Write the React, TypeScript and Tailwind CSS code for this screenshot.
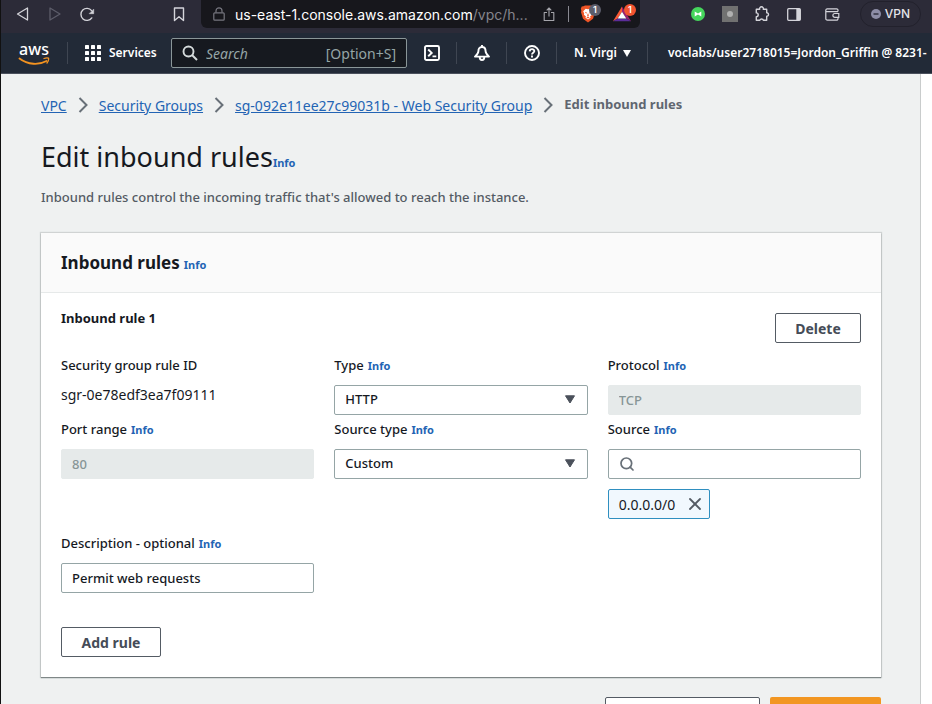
import React from "react";
import { Search, X } from "lucide-react";

const field =
  "h-[30px] w-full rounded-xs border border-[#95a5a6] bg-white px-2.5 text-[13px] font-medium text-[#16191f] outline-none";
const disabledField =
  "h-[30px] w-full rounded-xs border border-[#e6eaea] bg-[#e6eaea] px-2.5 text-[13px] font-medium text-[#879596] outline-none";
const outlineButton =
  "h-[30px] rounded-xs border border-[#545b64] bg-white text-[14px] font-bold text-[#454c57]";

function Info({ about }: { about: string }) {
  return (
    <a href="#info" aria-label={"Info about " + about} className="text-[11px] font-bold text-[#2364b4]">
      Info
    </a>
  );
}

function Separator() {
  return (
    <svg viewBox="0 0 10 16" className="h-4 w-2.5 shrink-0" fill="none" stroke="#687078" strokeWidth="2">
      <path d="m1.500 1 7 7-7 7" />
    </svg>
  );
}

function Field({
  id,
  label,
  info = true,
  children,
}: {
  id: string;
  label: string;
  info?: boolean;
  children: React.ReactNode;
}) {
  return (
    <div>
      <div className="mb-2.5 flex h-5 items-baseline gap-1 text-[13px] leading-5 font-medium">
        <label htmlFor={id}>{label}</label>
        {info && <Info about={label} />}
      </div>
      {children}
    </div>
  );
}

function Select({ id, value }: { id: string; value: string }) {
  return (
    <div className="relative">
      <select id={id} className={field + " appearance-none"}>
        <option>{value}</option>
      </select>
      <svg viewBox="0 0 12 9" className="pointer-events-none absolute top-[10px] right-3 h-[9px] w-3 fill-[#4b515b]">
        <path d="M1.500 .8h9L6 8z" stroke="#4b515b" strokeLinejoin="round" />
      </svg>
    </div>
  );
}

function BrowserBar() {
  return (
    <div className="flex h-[33px] shrink-0 bg-[#2c2b38] font-[Inter,sans-serif] text-[#d4d4da]">
      <div className="flex h-7 w-[200px] shrink-0 items-center pl-[15px]">
        <button aria-label="Back" className="w-8">
          <svg viewBox="0 0 14 14" className="size-3.5" fill="none" stroke="currentColor" strokeWidth="1.3" strokeLinejoin="round">
            <path d="M11.5 1v12L1.5 7z" />
          </svg>
        </button>
        <button aria-label="Forward" className="w-8 text-[#5d5d6a]">
          <svg viewBox="0 0 14 14" className="size-3.5" fill="none" stroke="currentColor" strokeWidth="1.3" strokeLinejoin="round">
            <path d="M2 1v12l10-6z" />
          </svg>
        </button>
        <button aria-label="Reload">
          <svg viewBox="0 0 15 15" className="size-[15px]" fill="none" stroke="currentColor" strokeWidth="1.4" strokeLinecap="round">
            <path d="M11.800 10.900A6 6 0 1 1 11.600 3.600" />
            <path d="M13.700 2.500v4.200H9.500z" fill="currentColor" strokeWidth=".6" strokeLinejoin="round" />
          </svg>
        </button>
        <button aria-label="Bookmark" className="mr-4 ml-auto">
          <svg viewBox="0 0 12 15" className="h-[15px] w-3" fill="none" stroke="currentColor" strokeWidth="1.4" strokeLinejoin="round">
            <path d="M1.5 1h9v12.5L6 9.8l-4.5 3.7z" />
          </svg>
        </button>
      </div>
      <div className="flex h-7 min-w-0 flex-1 items-center rounded-b-md bg-[#17171c] pr-[9px] pl-3">
        <svg viewBox="0 0 12 14" className="h-3.5 w-3 shrink-0" fill="none" stroke="#77777f" strokeWidth="1.2">
          <rect x=".8" y="5.8" width="10.4" height="7.4" rx="1" />
          <path d="M3 5.5V3.8a3 3 0 0 1 6 0v1.7" />
        </svg>
        <span className="ml-2.5 min-w-0 flex-1 truncate text-[14px] text-[#85858c]">
          <span className="text-white">us-east-1.console.aws.amazon.com</span>/vpc/h...
        </span>
        <button aria-label="Share" className="shrink-0">
          <svg viewBox="0 0 12 15" className="h-[15px] w-3" fill="none" stroke="#a5a5ab" strokeWidth="1.1" strokeLinejoin="round">
            <path d="M4 5.5H1.2v8h9.6v-8H8M6 9.5V1.2M3.7 3.3 6 1l2.3 2.3" />
          </svg>
        </button>
        <span className="mx-[13px] h-4 w-px shrink-0 bg-[#8a8a92]" />
        <button aria-label="Brave Shields" className="relative w-[31px] shrink-0">
          <svg viewBox="0 0 16 18" className="ml-[-2px] h-[18px] w-4">
            <path d="M3.5 1.2 5 .4h6l1.5.8 1.8.4.9 2.2-.6 2 .4 1.5-2 6.5L8 17.6l-5-3.8L1 7.3l.4-1.5-.6-2 .9-2.2z" fill="#ee5526" />
            <path d="m8 4.2 2.3-.5 2.5 2.6-1 2.2.3 1.3-2.1 1.6.7 1.2L8 14.5l-2.7-1.9.7-1.2-2.1-1.6.3-1.3-1-2.2 2.5-2.6z" fill="#fff" />
            <path d="m4.8 6.8 2 .7-.5 1.3zm6.4 0-2 .7.5 1.3zM8 8l.9 2.5L8 11.2l-.9-.7zm-1.6 4.3L8 11.6l1.6.7L8 13.6z" fill="#ee5526" />
          </svg>
          <span className="absolute top-[-1px] left-[7px] flex size-3 items-center justify-center rounded-full bg-[#5c5d6b] text-[9px] leading-3 font-semibold text-white">1</span>
        </button>
        <button aria-label="Brave Rewards" className="relative shrink-0">
          <svg viewBox="0 0 18 16" className="h-4 w-[18px]">
            <path d="M9 .5v5.2L4.7 12.5 0 15.3z" fill="#fb5935" />
            <path d="M9 .5v5.2l4.3 6.8 4.7 2.8z" fill="#9a2070" />
            <path d="m0 15.3 4.7-2.8h8.6l4.7 2.8z" fill="#5b2d9a" />
            <path d="m9 5.7 4.3 6.8H4.7z" fill="#fff" />
          </svg>
          <span className="absolute top-[-2px] right-[-5px] flex size-3 items-center justify-center rounded-full bg-[#f25430] text-[9px] leading-3 font-semibold text-white">1</span>
        </button>
      </div>
      <div className="flex h-7 w-[292px] shrink-0 items-center pl-[51px]">
        <button aria-label="Video extension">
          <svg viewBox="0 0 14 14" className="size-3.5">
            <circle cx="7" cy="7" r="7" fill="#45d65c" />
            <path d="M3.7 4.4 7 6.4l3.3-2v5.2L7 7.600l-3.300 2z" fill="#fff" />
          </svg>
        </button>
        <button aria-label="Extension" className="ml-[17px] flex size-4 items-center justify-center bg-[#717171]">
          <span className="size-1.5 rounded-full bg-[#b0b0b0]" />
        </button>
        <button aria-label="Extensions" className="ml-4">
          <svg viewBox="0 0 16 16" className="size-4" fill="none" stroke="currentColor" strokeWidth="1.4" strokeLinejoin="round">
            <path d="M2.3 3.3h3.4a1.9 1.9 0 1 1 3.6 0h3.4v3.4a1.8 1.8 0 1 1 0 3.6v4H9.4a1.9 1.9 0 0 0-3.6 0H2.3v-3.6a1.9 1.9 0 0 0 0-3.8z" />
          </svg>
        </button>
        <button aria-label="Sidebar" className="ml-[17px]">
          <svg viewBox="0 0 14 13" className="h-[13px] w-3.5" fill="none" stroke="currentColor" strokeWidth="1.3">
            <rect x=".7" y=".7" width="12.6" height="11.6" rx="1" />
            <path d="M9.3 1h4v11h-4z" fill="currentColor" stroke="none" />
          </svg>
        </button>
        <button aria-label="Wallet" className="ml-6">
          <svg viewBox="0 0 15 13" className="h-[13px] w-[15px]" fill="none" stroke="currentColor" strokeWidth="1.2">
            <path d="M13 3.600V2.200A1.400 1.400 0 0 0 11.600.8H2A1.400 1.400 0 0 0 .8 2.200v8.300A1.600 1.600 0 0 0 2.400 12.200h9.200A1.400 1.400 0 0 0 13 10.800V9.600M1 3.600h12" />
            <path d="M13.800 5.500H9.800a1.800 1.800 0 0 0 0 3.800h4z" />
          </svg>
        </button>
        <button className="ml-[20px] flex h-[26px] w-[61px] items-center justify-center gap-1 rounded-full border border-[#22212c] text-[12px] font-medium text-[#e4e4e8]">
          <svg viewBox="0 0 10 10" className="size-2.5">
            <circle cx="5" cy="5" r="5" fill="#8d8da6" />
            <path d="M2.500 5h5" stroke="#2c2b38" strokeWidth="1.400" />
          </svg>
          VPN
        </button>
      </div>
    </div>
  );
}

function ConsoleNav() {
  return (
    <nav className="flex h-[41px] shrink-0 items-center overflow-hidden border-b border-[#4a505c] bg-[#222a37] text-white">
      <a href="#home" aria-label="AWS home" className="ml-[17px] flex w-8 shrink-0 flex-col items-center pt-0.5">
        <span className="h-3.5 text-[16px] leading-3 font-medium">aws</span>
        <svg viewBox="0 0 32 9" className="h-[9px] w-8" fill="none" stroke="#f49320" strokeLinecap="round">
          <path d="M1.500 1.500C10 8 21 8.200 28.500 4" strokeWidth="1.900" />
          <path d="M26 1.500c2-.8 3.500-.8 4.500-.3.400 1.500-.3 3.300-1.500 4.800" strokeWidth="1.300" />
        </svg>
      </a>
      <span className="ml-[17px] h-[22px] w-px shrink-0 bg-[#3f4652]" />
      <button className="ml-[17px] flex shrink-0 items-center gap-2 text-[12px] font-semibold">
        <svg viewBox="0 0 16 16" className="size-4 fill-white">
          {[0, 6, 12].map((y) => [0, 6, 12].map((x) => <rect key={x + "-" + y} x={x} y={y} width="4" height="4" rx=".6" />))}
        </svg>
        <span className="w-[45px]">Services</span>
      </button>
      <div className="ml-[17px] flex h-[30px] w-[236px] shrink-0 items-center rounded-xs border border-[#8a9698] bg-[#16191f] px-2.5 text-[14px] text-[#95a5a6]">
        <svg viewBox="0 0 16 16" className="size-4 shrink-0" fill="none" stroke="#d5dbdb" strokeWidth="1.900">
          <circle cx="6.500" cy="6.500" r="5" />
          <path d="m10 10 5 5" />
        </svg>
        <input aria-label="Search" placeholder="Search" className="ml-2 w-0 min-w-0 flex-1 italic outline-none placeholder:text-[#95a5a6]" />
        <span>[Option+S]</span>
      </div>
      <button aria-label="CloudShell" className="flex h-[22px] w-[50px] shrink-0 items-center justify-center border-r border-[#3f4652]">
        <svg viewBox="0 0 16 16" className="size-4" fill="none" stroke="white" strokeWidth="1.900">
          <rect x="1" y="1" width="14" height="14" rx="1.500" />
          <path d="m4.200 4.500 3.500 3.400-3.500 3.400M8.500 11.400h3.800" />
        </svg>
      </button>
      <button aria-label="Notifications" className="flex h-[22px] w-[50px] shrink-0 items-center justify-center border-r border-[#3f4652]">
        <svg viewBox="0 0 16 16" className="size-4" fill="none" stroke="white" strokeWidth="1.900" strokeLinejoin="round">
          <path d="M8 0v2M8 2C5.300 2 4.400 4 4.400 6.300 4.400 8.500 3 9.800 1 11.600h14c-2-1.800-3.400-3.100-3.400-5.300C11.600 4 10.700 2 8 2z" />
          <path d="M5.700 12c0 3.900 4.600 3.900 4.600 0" />
        </svg>
      </button>
      <button aria-label="Help" className="flex h-[22px] w-[50px] shrink-0 items-center justify-center border-r border-[#3f4652]">
        <svg viewBox="0 0 16 16" className="size-4" fill="none" stroke="white" strokeWidth="1.900">
          <circle cx="8" cy="8" r="7" />
          <path d="M5.700 6.400C5.800 3.300 10.400 3.500 10.300 6.200 10.200 7.700 8 7.700 8 9.500M8 10.600v1.800" />
        </svg>
      </button>
      <button className="flex h-[22px] w-[91px] shrink-0 items-center gap-1.5 border-r border-[#3f4652] pl-[17px] text-[12px] font-semibold whitespace-nowrap">
        N. Virgi
        <svg viewBox="0 0 8 7" className="h-[7px] w-2 fill-white">
          <path d="M0 0h8L4 7z" />
        </svg>
      </button>
      <button className="ml-5 shrink-0 text-[12px] font-semibold whitespace-nowrap">voclabs/user2718015=Jordon_Griffin @ 8231-</button>
    </nav>
  );
}

export default function App() {
  return (
    <div className="flex h-screen flex-col overflow-hidden border-l border-[#111] bg-white font-['Noto_Sans','Open_Sans',sans-serif] text-[#16191f]">
      <BrowserBar />
      <ConsoleNav />
      <main className="mr-[11px] min-h-0 flex-1 overflow-hidden border-r border-[#c9cccc] bg-[#eff1f1] pt-[21px] pr-[39px] pl-10">
        <nav aria-label="Breadcrumb" className="flex h-5 items-center gap-[11px] text-[14px] whitespace-nowrap text-[#2364b4]">
          <a href="#vpc" className="underline">VPC</a>
          <Separator />
          <a href="#groups" className="underline">Security Groups</a>
          <Separator />
          <a href="#group" className="underline">sg-092e11ee27c99031b - Web Security Group</a>
          <Separator />
          <span aria-current="page" className="text-[13px] font-bold text-[#5f6670]">Edit inbound rules</span>
        </nav>
        <div className="mt-6 flex h-9 items-baseline">
          <h1 className="text-[27px] leading-9">Edit inbound rules</h1>
          <Info about="editing inbound rules" />
        </div>
        <p className="mt-3 text-[13px] leading-5 font-medium text-[#545b64]">
          Inbound rules control the incoming traffic that's allowed to reach the instance.
        </p>

        <section className="mt-[26px] bg-white shadow-[0_1px_1px_0_#7f8787,0_0_1px_1px_#d0d3d3]">
          <header className="flex h-[60px] items-baseline gap-1 border-b border-[#e6e9e9] bg-[#fafafa] px-5 pt-4">
            <h2 className="text-[17px] leading-7 font-bold">Inbound rules</h2>
            <Info about="inbound rules" />
          </header>
          <form className="px-5 pt-[15px] pb-5">
            <div className="flex items-start justify-between">
              <h3 className="text-[13px] leading-5 font-bold">Inbound rule 1</h3>
              <button type="button" className={outlineButton + " mt-[5px] w-[86px]"}>Delete</button>
            </div>
            <div className="mt-3 grid grid-cols-3 gap-x-5 gap-y-1">
              <Field id="rule-id" label="Security group rule ID" info={false}>
                <output id="rule-id" className="block text-[14px] leading-5">sgr-0e78edf3ea7f09111</output>
              </Field>
              <Field id="type" label="Type">
                <Select id="type" value="HTTP" />
              </Field>
              <Field id="protocol" label="Protocol">
                <input id="protocol" disabled defaultValue="TCP" className={disabledField} />
              </Field>
              <Field id="port" label="Port range">
                <input id="port" disabled defaultValue="80" className={disabledField} />
              </Field>
              <Field id="source-type" label="Source type">
                <Select id="source-type" value="Custom" />
              </Field>
              <Field id="source" label="Source">
                <div className="flex h-[30px] items-center rounded-xs border border-[#95a5a6] px-2.5">
                  <Search className="size-4 text-[#687078]" strokeWidth={2.600} />
                  <input id="source" className="ml-2 min-w-0 flex-1 text-[13px] outline-none" />
                </div>
                <div className="mt-2.5 flex h-[30px] w-[102px] items-center justify-between rounded-xs border border-[#2f8fc0] bg-[#f1f8fe] pr-1 pl-2.5 text-[14px]">
                  0.0.0.0/0
                  <button type="button" aria-label="Remove 0.0.0.0/0">
                    <X className="size-5 text-[#545b64]" strokeWidth={2.200} />
                  </button>
                </div>
              </Field>
            </div>
            <div className="mt-3.5 grid grid-cols-3 gap-x-5">
              <Field id="description" label="Description - optional">
                <input id="description" defaultValue="Permit web requests" className={field} />
              </Field>
            </div>
            <button type="button" className={outlineButton + " mt-[34px] w-[100px]"}>Add rule</button>
          </form>
        </section>
        <div className="mt-5 flex justify-end gap-2.5">
          <button aria-label="Preview changes" className={outlineButton + " w-[155px]"} />
          <button aria-label="Save rules" className="h-[30px] w-[111px] rounded-xs bg-[#f29622]" />
        </div>
      </main>
    </div>
  );
}
